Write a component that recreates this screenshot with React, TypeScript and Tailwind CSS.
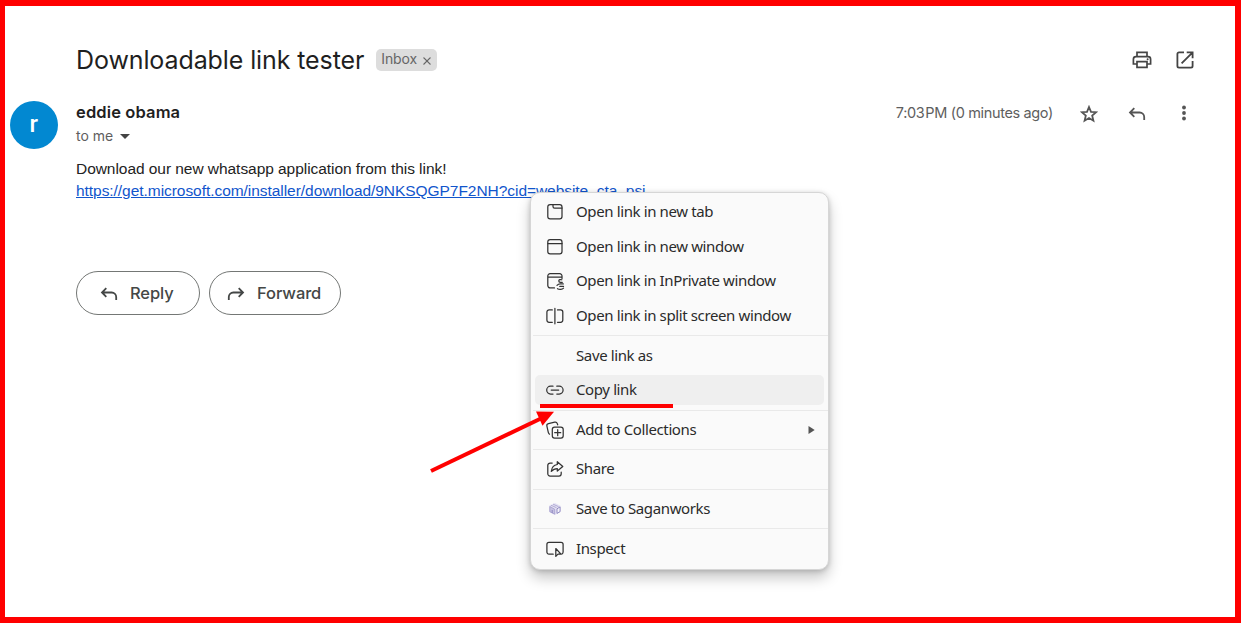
import type { ReactNode } from "react";

const line = {
  fill: "none",
  stroke: "currentColor",
  strokeLinecap: "round" as const,
  strokeLinejoin: "round" as const,
};

function MenuSvg({ children }: { children: ReactNode }) {
  return (
    <svg width="20" height="20" viewBox="0 0 20 20" {...line} strokeWidth="1.25" className="block shrink-0 text-[#333]">
      {children}
    </svg>
  );
}

const icons = {
  tab: (
    <MenuSvg>
      <rect x="2.8" y="2.7" width="14.2" height="14.2" rx="2.3" />
      <path d="M8 2.8v1.6c0 1 .6 1.6 1.6 1.6H17" />
    </MenuSvg>
  ),
  win: (
    <MenuSvg>
      <rect x="2.8" y="2.7" width="14.2" height="14.2" rx="2.3" />
      <path d="M3 6.6h14" />
    </MenuSvg>
  ),
  priv: (
    <MenuSvg>
      <path d="M9.5 16.9H5.1a2.3 2.3 0 0 1-2.3-2.3V5a2.3 2.3 0 0 1 2.3-2.3h9.6A2.3 2.3 0 0 1 17 5v2.5M3 6.1h14" />
      <path d="M16.8 8.8c-1.6-.7-3 0-3 1.2 0 .9.7 1.3 1.7 1.3h1.8M12 14.3c.9-1 2-1.4 3.3-1.4h3M18.5 15.4h-3.7M18.5 17.2c-1.2 1.3-4.2 1.6-6 .5" />
    </MenuSvg>
  ),
  split: (
    <MenuSvg>
      <path d="M7.3 3.9H4.1a2.2 2.2 0 0 0-2.2 2.2v8a2.2 2.2 0 0 0 2.2 2.2h3.2M12.5 3.9h3.1a2.2 2.2 0 0 1 2.2 2.2v8a2.2 2.2 0 0 1-2.2 2.2h-3.1M9.9 2.3v15.5" />
    </MenuSvg>
  ),
  link: (
    <MenuSvg>
      <path d="M8 6.2H5.6a3.9 3.9 0 0 0 0 7.8H8M11.8 6.2h2.4a3.9 3.9 0 0 1 0 7.8h-2.4M6.2 10.1h7.5" />
    </MenuSvg>
  ),
  coll: (
    <MenuSvg>
      <rect x="7.3" y="7.2" width="10.9" height="10.9" rx="2.3" />
      <path d="M12.7 9.7v6M9.7 12.7h6M4.5 14.2c-.7-.4-1-1-1.2-1.8L1.9 6.1c-.3-1.3.3-2.2 1.6-2.5l6.2-1.5c1.3-.3 2.2.3 2.6 1.5l.4 1.2" />
    </MenuSvg>
  ),
  share: (
    <MenuSvg>
      <path d="M7.2 4H5.1a2.3 2.3 0 0 0-2.3 2.3v8.4A2.3 2.3 0 0 0 5.1 17h8.8a2.3 2.3 0 0 0 2.3-2.3v-1.5" />
      <path d="M12.3 2.7 17.8 7.4l-5.5 4.7V9.5c-2.7 0-4.3.8-6 2.9.4-3.8 2.3-6.4 6-6.9z" />
    </MenuSvg>
  ),
  inspect: (
    <MenuSvg>
      <path d="M8.2 15.2H4a2.1 2.1 0 0 1-2.1-2.1V5.5A2.1 2.1 0 0 1 4 3.4h12a2.1 2.1 0 0 1 2.1 2.1v7.6c0 1-.5 1.7-1.3 2" />
      <path d="m10.8 9.5 5.2 5.6h-3l-2.2 2.3z" />
    </MenuSvg>
  ),
  sagan: (
    <svg width="20" height="20" viewBox="0 0 20 20" className="block shrink-0">
      <path d="m10 4 5.500 2.800v6.100L10 16.100l-5.800-3.200V6.800z" fill="#e4e1f3" />
      <path d="m4.800 7.500 4.900 2.700v5L4.800 12.700zM5.900 6.200l5.600 2.500M8 5.100l5.600 2.600" fill="#c6c1e2" stroke="#a39dcb" strokeWidth=".8" />
      <path d="m12 9.800 3.100-1.900v4.700L12 14.400zM7.200 11v3" fill="#f5f4fb" stroke="#8a83bd" strokeWidth=".9" />
    </svg>
  ),
};

function Item({ icon, label, active, arrow }: { icon?: ReactNode; label: string; active?: boolean; arrow?: boolean }) {
  return (
    <div className="flex h-[34.6px] items-center px-1">
      <div className={`flex h-[30px] w-full items-center rounded-[5px] pl-[9.5px] pr-[9px] ${active ? "bg-[#efefef]" : ""}`}>
        <span className="mr-[11.5px] w-5 shrink-0">{icon}</span>
        <span className="mb-[2px] whitespace-nowrap font-['Noto_Sans',sans-serif] text-[15px] leading-5 tracking-[-0.38px] text-[#2b2b2b]">{label}</span>
        {arrow && (
          <svg width="7" height="8" viewBox="0 0 7 8" className="ml-auto">
            <path d="M.5 0v8L6.7 4z" fill="#555" />
          </svg>
        )}
      </div>
    </div>
  );
}

function Separator() {
  return <div className="mt-[2px] mb-[2px] ml-[2px] h-px bg-[#e9e9e9]" />;
}

function ReplyArrow({ flip, className }: { flip?: boolean; className: string }) {
  return (
    <svg width="18" height="14" viewBox="0 0 18 14" {...line} strokeLinecap="butt" strokeLinejoin="miter" strokeWidth="1.8" className={`block shrink-0 ${className} ${flip ? "-scale-x-100" : ""}`}>
      <path d="M6.3 1.2 2 5.5l4.3 4.3M2 5.5h9.7a4.5 4.5 0 0 1 4.5 4.5v3" />
    </svg>
  );
}

export default function App() {
  return (
    <div className="relative flex h-[623px] w-[1241px] flex-col overflow-hidden border-6 border-l-5 border-[#ff0000] bg-white font-[Inter,sans-serif] text-[#1f1f1f]">
      <header className="mt-[38px] flex h-8 items-center pl-[71px] pr-[41.5px]">
        <h1 className="whitespace-nowrap text-[25px] leading-8 tracking-[-0.1px]">Downloadable link tester</h1>
        <span className="ml-3 flex h-[22px] w-[61px] items-center rounded-[5px] bg-[#ddd] pl-[5px] text-[14px] tracking-[-0.15px] text-[#666]">
          <span className="mb-[3px]">Inbox</span>
          <svg width="8" height="8" viewBox="0 0 9 9" className="mt-[2px] ml-[6px]" {...line} strokeWidth="1.5">
            <path d="m1 1 7 7M8 1 1 8" />
          </svg>
        </span>
        <div className="ml-auto flex items-center gap-[24px] text-[#444]">
          <svg width="20" height="18" viewBox="0 0 20 18" fill="none" stroke="currentColor" strokeWidth="1.7">
            <path d="M5 5V1.3h10V5M5 13H1.4V8.2A2.6 2.6 0 0 1 4 5.6h12a2.6 2.6 0 0 1 2.6 2.6V13H15" />
            <path d="M5 10.7h10v5.6H5z" />
            <circle cx="15.6" cy="8.3" r="1" fill="currentColor" stroke="none" />
          </svg>
          <svg width="18" height="18" viewBox="0 0 18 18" fill="none" stroke="currentColor" strokeWidth="1.8">
            <path d="M8 1.4H3A1.6 1.6 0 0 0 1.4 3v12A1.6 1.6 0 0 0 3 16.6h12a1.6 1.6 0 0 0 1.6-1.6v-5M10.7 1.4h5.9v5.9M16.4 1.6 5.6 12.4" />
          </svg>
        </div>
      </header>

      <section className="mt-[25px] flex h-[48px] pl-[5px] pr-[48px]">
        <div className="flex size-[47.5px] items-center justify-center rounded-full bg-[#0288d1] pb-px font-[Roboto,sans-serif] text-[24px] font-medium text-white">r</div>
        <div className="ml-[18.5px]">
          <div className="mt-[1px] h-5 whitespace-nowrap text-[16.5px] leading-5 font-semibold tracking-[0.12px]">eddie obama</div>
          <div className="mt-[3px] flex h-5 items-center text-[14px] text-[#5e5e5e]">
            to me
            <svg width="10" height="5" viewBox="0 0 10 5" className="mt-[2px] ml-[7px]">
              <path d="M0 0h10L5 5z" fill="#444" />
            </svg>
          </div>
        </div>
        <div className="mt-[2px] ml-auto flex h-5 items-center text-[#555]">
          <span className="whitespace-nowrap text-[14.5px] tracking-[-0.35px] text-[#5e5e5e]">7:03{"\u200A"}PM (0 minutes ago)</span>
          <svg width="18" height="18" viewBox="0 0 18 18" fill="none" stroke="currentColor" strokeWidth="1.8" className="mt-px ml-[27px]">
            <path d="m9 2 2 4.8 5.2.4-4 3.4 1.2 5.1L9 13l-4.400 2.700 1.200-5.100-4-3.400 5.200-.4z" />
          </svg>
          <ReplyArrow className="mt-[2px] ml-[30px]" />
          <svg width="6" height="16" viewBox="0 0 6 16" className="ml-[35px]" fill="currentColor">
            <circle cx="3" cy="2.5" r="1.9" />
            <circle cx="3" cy="8" r="1.9" />
            <circle cx="3" cy="13.5" r="1.9" />
          </svg>
        </div>
      </section>

      <section className="mt-[9px] pl-[71px] font-['Liberation_Sans',sans-serif] text-[15.5px] leading-[22px] tracking-[-0.05px] text-[#222]">
        <p className="whitespace-nowrap">Download our new whatsapp application from this link!</p>
        <a className="whitespace-nowrap text-[#1155cc] underline">https://get.microsoft.com/installer/download/9NKSQGP7F2NH?cid=website_cta_psi</a>
      </section>

      <div className="mt-[69px] flex gap-[9px] pl-[71px] text-[16.5px] font-medium tracking-[-0.1px] text-[#444746]">
        <button className="flex h-[44px] w-[124px] items-center rounded-full border border-[#747775] pl-[23px]">
          <ReplyArrow className="mt-[2px] mr-[12px]" />
          <span>Reply</span>
        </button>
        <button className="flex h-[44px] w-[132px] items-center rounded-full border border-[#747775] pl-[17px]">
          <ReplyArrow flip className="mt-[2px] mr-[12px]" />
          <span>Forward</span>
        </button>
      </div>

      <div className="absolute top-[186px] left-[525px] h-[378px] w-[299px] rounded-[10px] border border-[#d6d6d6] bg-[#fafafa] pt-[2px] shadow-[0_8px_14px_rgba(0,0,0,0.22),0_1px_5px_rgba(0,0,0,0.18)]">
        <Item icon={icons.tab} label="Open link in new tab" />
        <Item icon={icons.win} label="Open link in new window" />
        <Item icon={icons.priv} label="Open link in InPrivate window" />
        <Item icon={icons.split} label="Open link in split screen window" />
        <Separator />
        <Item label="Save link as" />
        <Item icon={icons.link} label="Copy link" active />
        <Separator />
        <Item icon={icons.coll} label="Add to Collections" arrow />
        <Separator />
        <Item icon={icons.share} label="Share" />
        <Separator />
        <Item icon={icons.sagan} label="Save to Saganworks" />
        <Separator />
        <Item icon={icons.inspect} label="Inspect" />
      </div>

      <svg width="250" height="80" viewBox="425 400 250 80" className="pointer-events-none absolute top-[394px] left-[420px]">
        <path d="M540 406h133" stroke="#f00" strokeWidth="4" />
        <path d="m431 471 112-53.5" stroke="#f00" strokeWidth="4" />
        <path d="m536 411.5 18 .3-11.5 14z" fill="#f00" />
      </svg>
    </div>
  );
}
